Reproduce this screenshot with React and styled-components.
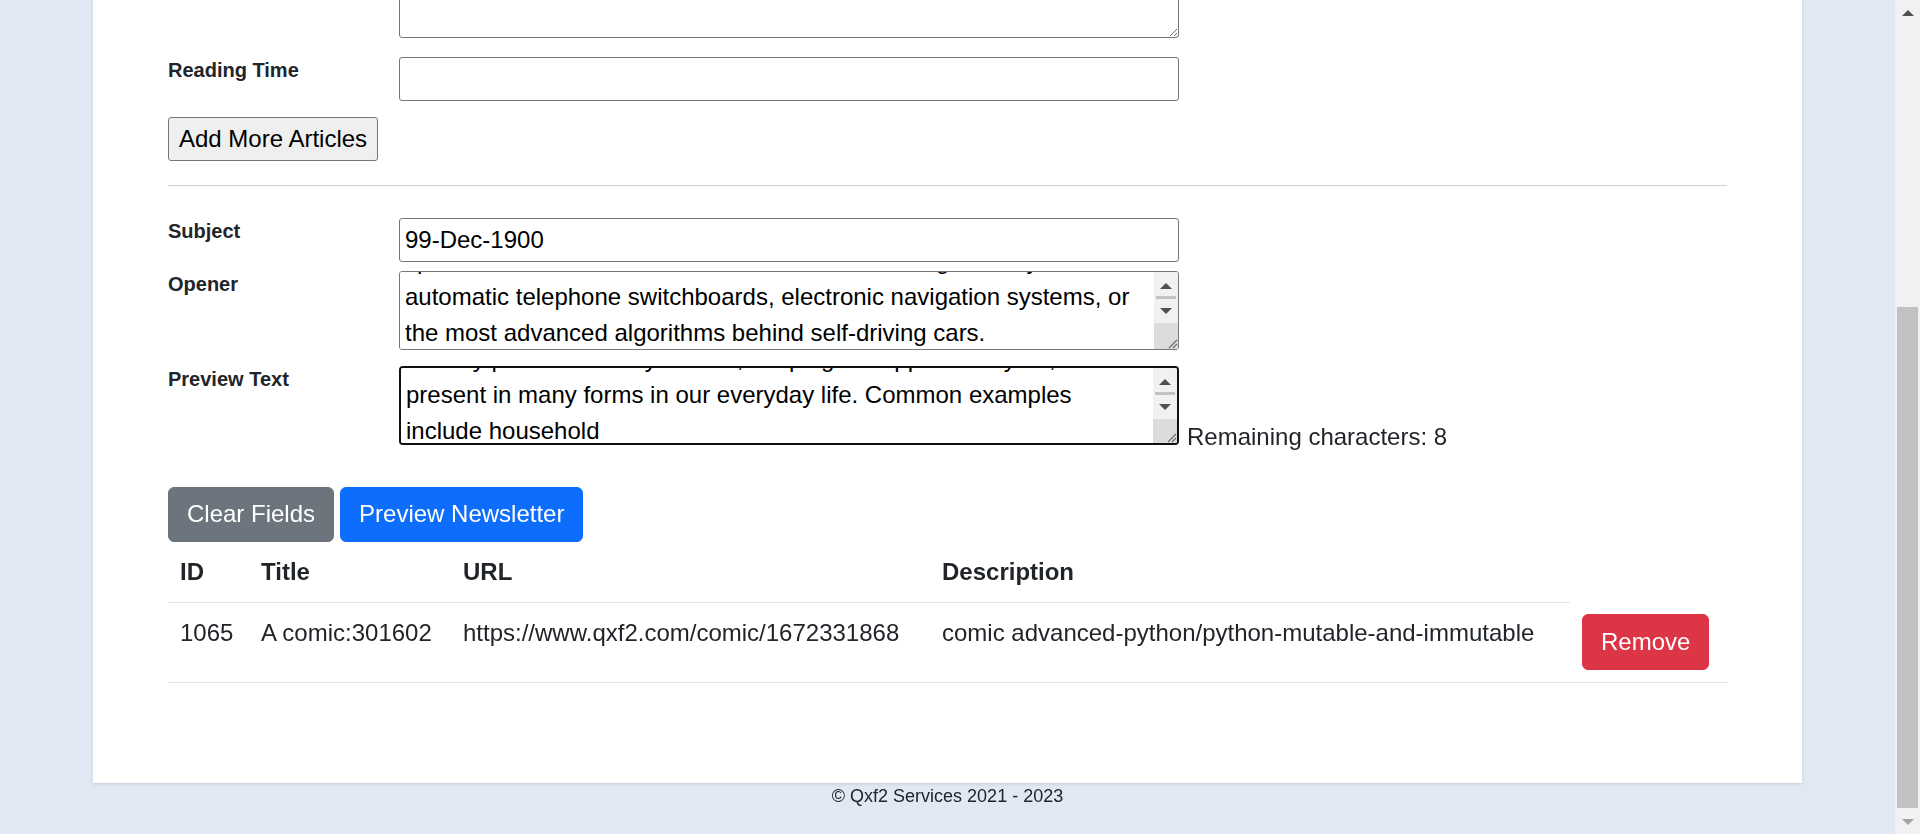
import React, { useLayoutEffect, useRef } from 'react'
import styled, { createGlobalStyle } from 'styled-components'

const GlobalStyle = createGlobalStyle`
  html, body {
    margin: 0;
    padding: 0;
    height: 100%;
  }
  body {
    font-family: "Liberation Sans", Arial, sans-serif;
    color: #212529;
    background: #e1e8f4;
    overflow: hidden;
  }
  *, *::before, *::after {
    box-sizing: border-box;
  }
`

const Screen = styled.div`
  display: flex;
  height: 100vh;
`

const Viewport = styled.div`
  flex: 1;
  overflow: hidden;
  background: #e1e8f4;
`

const Card = styled.main`
  width: 1709px;
  margin: 0 auto;
  padding: 48px 75px 76px;
  background: #fff;
  box-shadow: 0 1px 3px rgba(0, 0, 0, 0.12);
`

const Heading = styled.h1`
  margin: 0 0 36px;
  font-size: 48px;
  font-weight: 500;
  line-height: 1.2;
`

const FormRow = styled.div`
  display: grid;
  grid-template-columns: 231px auto;
  align-items: start;
  margin-bottom: ${p => p.$gap}px;
`

const Label = styled.label`
  font-size: 20px;
  font-weight: 700;
  line-height: 30px;
  margin-top: -2px;
`

const FieldCell = styled.div`
  display: flex;
  align-items: flex-end;
`

const TextInput = styled.input`
  width: 780px;
  height: 44px;
  padding: 0 5px;
  font: 24px "Liberation Sans", Arial, sans-serif;
  color: #000;
  background: #fff;
  border: 1px solid #767676;
  border-radius: 3px;
  outline: none;
`

const Select = styled.select`
  width: 780px;
  height: 44px;
  padding: 0 3px;
  font: 24px "Liberation Sans", Arial, sans-serif;
  color: #000;
  background: #fff;
  border: 1px solid #767676;
  border-radius: 3px;
`

const PlainArea = styled.textarea`
  display: block;
  width: 780px;
  height: 80px;
  padding: 2px 5px;
  font: 24px/36px "Liberation Sans", Arial, sans-serif;
  color: #000;
  border: 1px solid #767676;
  border-radius: 3px;
  resize: vertical;
  outline: none;
`

const FieldBox = styled.div`
  display: flex;
  width: 780px;
  height: 79px;
  background: #fff;
  border: ${p => (p.$focused ? '2px solid #101010' : '1px solid #767676')};
  border-radius: ${p => (p.$focused ? 4 : 3)}px;
  overflow: hidden;
`

// the text runs a little past the bottom edge, as in a textarea scrolled to its caret
const TextArea = styled.textarea`
  flex: 1;
  align-self: flex-start;
  min-width: 0;
  height: calc(100% + ${p => p.$overhang}px);
  padding: 2px 8px 0 5px;
  font: 24px/36px "Liberation Sans", Arial, sans-serif;
  color: #000;
  background: #fff;
  border: 0;
  outline: none;
  resize: none;
  overflow: hidden;
`

const MiniBar = styled.div`
  width: 24px;
  display: flex;
  flex-direction: column;
  background: #f1f1f1;
`

const MiniButton = styled.div`
  height: 24px;
  display: flex;
  align-items: center;
  justify-content: center;
  &::after {
    content: '';
    border-left: 6px solid transparent;
    border-right: 6px solid transparent;
    ${p => (p.$dir === 'up'
      ? 'border-bottom: 6px solid #505050; margin-top: 4px;'
      : 'border-top: 6px solid #505050;')}
  }
`

const MiniThumb = styled.div`
  height: 3px;
  margin: 0 2px;
  background: #c1c1c1;
`

const Corner = styled.div`
  flex: 1;
  display: flex;
  align-items: flex-end;
  justify-content: flex-end;
  background: #dcdcdc;
`

const Remaining = styled.span`
  margin: 0 0 -4px 8px;
  font-size: 24px;
  line-height: 24px;
  color: #212529;
`

const PlainButton = styled.button`
  height: 44px;
  padding: 0 10px;
  font: 24px "Liberation Sans", Arial, sans-serif;
  color: #000;
  background: #efefef;
  border: 1px solid #767676;
  border-radius: 3px;
`

const Rule = styled.hr`
  margin: 24px 0 32px;
  border: 0;
  border-top: 1px solid #d0d1d2;
`

const ButtonRow = styled.div`
  display: flex;
  gap: 6px;
`

const tones = {
  secondary: '#6c757d',
  primary: '#0d6efd',
  danger: '#dc3545',
}

const Btn = styled.button`
  padding: ${p => (p.$tall ? '9px' : '8.5px')} 18px;
  font: 24px/36px "Liberation Sans", Arial, sans-serif;
  color: #fff;
  background: ${p => tones[p.$tone]};
  border: 1px solid ${p => tones[p.$tone]};
  border-radius: 6px;
`

const Table = styled.table`
  width: 100%;
  margin-bottom: 24px;
  border-collapse: collapse;
  table-layout: fixed;
  font-size: 24px;
  line-height: 36px;
  color: #212529;
`

const Th = styled.th`
  padding: 12px;
  text-align: left;
  font-weight: 700;
  vertical-align: bottom;
  border-bottom: 1px solid #dee2e6;
`

const Td = styled.td`
  padding: 12px;
  vertical-align: top;
  border-bottom: 1px solid #dee2e6;
`

const Footer = styled.footer`
  padding-bottom: 24px;
  text-align: center;
  font-size: 18px;
  line-height: 27px;
  color: #212529;
`

const PageBar = styled.div`
  width: 25px;
  display: flex;
  flex-direction: column;
  background: #f1f1f1;
`

const PageArrow = styled.div`
  height: 25px;
  display: flex;
  align-items: center;
  justify-content: center;
  &::after {
    content: '';
    border-left: 6px solid transparent;
    border-right: 6px solid transparent;
    ${p => (p.$dir === 'up'
      ? 'border-bottom: 6px solid #505050;'
      : 'border-top: 6px solid #a3a3a3;')}
  }
`

const PageTrack = styled.div`
  flex: 1;
  padding: 0 2px;
`

const PageThumb = styled.div`
  height: 501px;
  margin-top: 282px;
  background: #c1c1c1;
`

const Grip = () => (
  <svg width="12" height="12" viewBox="0 0 12 12">
    <path d="M11 3 L3 11 M11 7 L7 11" stroke="#6e6e6e" strokeWidth="1.2" />
  </svg>
)

const ScrollArea = React.forwardRef(({ focused, value, overhang }, ref) => (
  <FieldBox $focused={focused}>
    <TextArea ref={ref} defaultValue={value} $overhang={overhang} />
    <MiniBar>
      <MiniButton $dir="up" />
      <MiniThumb />
      <MiniButton $dir="down" />
      <Corner>
        <Grip />
      </Corner>
    </MiniBar>
  </FieldBox>
))

const opener =
  'Artificial Intelligence is no longer a thing of the future. It already runs quietly behind\n' +
  'spam filters, voice assistants, recommendation engines, toy robots,\n' +
  'automatic telephone switchboards, electronic navigation systems, or the most advanced algorithms behind self-driving cars.'

const preview =
  'Artificial Intelligence may sound like a futuristic concept, but it is\n' +
  'already part of our daily routine, shaping the apps we rely on, and is\n' +
  'present in many forms in our everyday life. Common examples include household'

const rows = [
  {
    id: 1065,
    title: 'A comic:301602',
    url: 'https://www.qxf2.com/comic/1672331868',
    description: 'comic advanced-python/python-mutable-and-immutable',
  },
]

export default function App() {
  const viewRef = useRef(null)
  const openerRef = useRef(null)
  const previewRef = useRef(null)

  useLayoutEffect(() => {
    const view = viewRef.current
    view.scrollTop = view.scrollHeight
    const op = openerRef.current
    op.scrollTop = op.scrollHeight
    const pv = previewRef.current
    const end = pv.value.length
    pv.focus({ preventScroll: true })
    pv.setSelectionRange(end, end)
    pv.scrollTop = pv.scrollHeight
    view.scrollTop = view.scrollHeight
  }, [])

  return (
    <>
      <GlobalStyle />
      <Screen>
        <Viewport ref={viewRef}>
          <Card>
            <Heading>Newsletter Generator</Heading>
            <FormRow $gap={16}>
              <Label>Category</Label>
              <Select defaultValue="comic">
                <option value="comic">Comic</option>
              </Select>
            </FormRow>
            <FormRow $gap={16}>
              <Label>URL</Label>
              <TextInput />
            </FormRow>
            <FormRow $gap={16}>
              <Label>Title</Label>
              <TextInput />
            </FormRow>
            <FormRow $gap={19}>
              <Label>Description</Label>
              <PlainArea />
            </FormRow>
            <FormRow $gap={16}>
              <Label>Reading Time</Label>
              <TextInput />
            </FormRow>
            <PlainButton>Add More Articles</PlainButton>
            <Rule />
            <FormRow $gap={9}>
              <Label>Subject</Label>
              <TextInput defaultValue="99-Dec-1900" />
            </FormRow>
            <FormRow $gap={16}>
              <Label>Opener</Label>
              <ScrollArea ref={openerRef} value={opener} overhang={2} />
            </FormRow>
            <FormRow $gap={42}>
              <Label>Preview Text</Label>
              <FieldCell>
                <ScrollArea ref={previewRef} value={preview} overhang={6} focused />
                <Remaining>Remaining characters: 8</Remaining>
              </FieldCell>
            </FormRow>
            <ButtonRow>
              <Btn $tone="secondary">Clear Fields</Btn>
              <Btn $tone="primary">Preview Newsletter</Btn>
            </ButtonRow>
            <Table>
              <colgroup>
                <col style={{ width: 81 }} />
                <col style={{ width: 202 }} />
                <col style={{ width: 479 }} />
                <col style={{ width: 640 }} />
                <col style={{ width: 158 }} />
              </colgroup>
              <thead>
                <tr>
                  <Th>ID</Th>
                  <Th>Title</Th>
                  <Th>URL</Th>
                  <Th>Description</Th>
                </tr>
              </thead>
              <tbody>
                {rows.map(r => (
                  <tr key={r.id}>
                    <Td>{r.id}</Td>
                    <Td>{r.title}</Td>
                    <Td>{r.url}</Td>
                    <Td>{r.description}</Td>
                    <Td>
                      <Btn $tone="danger" $tall>Remove</Btn>
                    </Td>
                  </tr>
                ))}
              </tbody>
            </Table>
          </Card>
          <Footer>© Qxf2 Services 2021 - 2023</Footer>
        </Viewport>
        <PageBar>
          <PageArrow $dir="up" />
          <PageTrack>
            <PageThumb />
          </PageTrack>
          <PageArrow $dir="down" />
        </PageBar>
      </Screen>
    </>
  )
}
